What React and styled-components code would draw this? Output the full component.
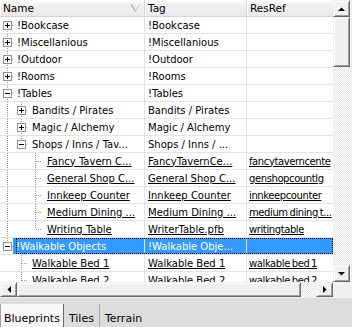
import React from 'react'
import styled, { createGlobalStyle } from 'styled-components'

const GlobalStyle = createGlobalStyle`
  html, body { margin: 0; padding: 0; background: #fff; }
  body {
    font-family: "DejaVu Sans", Verdana, sans-serif;
    font-size: 10px;
    color: #000;
  }
`

const LINE = '#a0a0a0'
const GRID = '#e3e3e3'

const rows = [
  { name: '!Bookcase', tag: '!Bookcase', gutter: [{ box: 'plus', down: true }] },
  { name: '!Miscellanious', tag: '!Miscellanious', gutter: [{ box: 'plus', up: true, down: true }] },
  { name: '!Outdoor', tag: '!Outdoor', gutter: [{ box: 'plus', up: true, down: true }] },
  { name: '!Rooms', tag: '!Rooms', gutter: [{ box: 'plus', up: true, down: true }] },
  { name: '!Tables', tag: '!Tables', gutter: [{ box: 'minus', up: true, down: true }] },
  { name: 'Bandits / Pirates', tag: 'Bandits / Pirates', gutter: [{ up: true, down: true, pass: true }, { box: 'plus', up: true, down: true }] },
  { name: 'Magic / Alchemy', tag: 'Magic / Alchemy', gutter: [{ up: true, down: true, pass: true }, { box: 'plus', up: true, down: true }] },
  { name: 'Shops / Inns / Tav...', tag: 'Shops / Inns / ...', gutter: [{ up: true, down: true, pass: true }, { box: 'minus', up: true }] },
  { name: 'Fancy Tavern C...', tag: 'FancyTavernCe...', res: 'fancytaverncente', leaf: true, gutter: [{ up: true, down: true, pass: true }, {}, { up: true, down: true }] },
  { name: 'General Shop C...', tag: 'General Shop C...', res: 'genshopcountlg', leaf: true, gutter: [{ up: true, down: true, pass: true }, {}, { up: true, down: true }] },
  { name: 'Innkeep Counter', tag: 'Innkeep Counter', res: 'innkeepcounter', leaf: true, gutter: [{ up: true, down: true, pass: true }, {}, { up: true, down: true }] },
  { name: 'Medium Dining ...', tag: 'Medium Dining ...', res: 'medium dining t...', leaf: true, gutter: [{ up: true, down: true, pass: true }, {}, { up: true, down: true }] },
  { name: 'Writing Table', tag: 'WriterTable.pfb', res: 'writingtable', leaf: true, gutter: [{ up: true, down: true, pass: true }, {}, { up: true }] },
  { name: '!Walkable Objects', tag: '!Walkable Obje...', selected: true, gutter: [{ box: 'minus', up: true }] },
  { name: 'Walkable Bed 1', tag: 'Walkable Bed 1', res: 'walkable bed 1', leaf: true, gutter: [{}, { up: true, down: true }] },
  { name: 'Walkable Bed 2', tag: 'Walkable Bed 2', res: 'walkable bed 2', leaf: true, gutter: [{}, { up: true, down: true }] },
]

function Segment({ box, up, down, pass }) {
  const hasLine = up || down
  return (
    <svg width="14" height="16" viewBox="0 0 14 16" shapeRendering="crispEdges" style={{ flex: 'none', display: 'block' }}>
      {hasLine && (
        <line x1="7.5" x2="7.5" y1={up ? 0 : 8} y2={down ? 16 : 8} stroke={LINE} strokeDasharray="1 1" />
      )}
      {hasLine && !pass && (
        <line x1={box ? 12 : 8} x2="14" y1="8.5" y2="8.5" stroke={LINE} strokeDasharray="1 1" />
      )}
      {box && (
        <g>
          <rect x="3.5" y="4.5" width="8" height="8" fill="#fff" stroke="#919191" />
          <line x1="5" x2="10" y1="8.5" y2="8.5" stroke="#000" />
          {box === 'plus' && <line x1="7.5" x2="7.5" y1="6" y2="11" stroke="#000" />}
        </g>
      )}
    </svg>
  )
}

function Arrow({ dir }) {
  const pts = {
    up: '0,4 7,4 3.5,0.5',
    down: '0,0 7,0 3.5,3.5',
    left: '4,0 4,7 0.5,3.5',
    right: '0,0 0,7 3.5,3.5',
  }[dir]
  const vertical = dir === 'up' || dir === 'down'
  return (
    <svg width={vertical ? 7 : 4} height={vertical ? 4 : 7} viewBox={vertical ? '0 0 7 4' : '0 0 4 7'}>
      <polygon points={pts} fill="#000" />
    </svg>
  )
}

export default function App() {
  return (
    <Frame>
      <GlobalStyle />
      <ListPane>
        <List>
          <Header>
            <HeaderCell>
              Name
              <SortGlyph width="9" height="8" viewBox="0 0 9 8">
                <polyline points="0.5,0.5 4.5,7.5" stroke="#8f8f8f" fill="none" />
                <polyline points="4.5,7.5 8.5,0.5" stroke="#c4c4c4" fill="none" />
              </SortGlyph>
            </HeaderCell>
            <HeaderCell>Tag</HeaderCell>
            <HeaderCell $last>ResRef</HeaderCell>
          </Header>
          {rows.map((r, i) => (
            <Row key={i}>
              <NameCell>
                <Gutter>
                  {r.gutter.map((g, j) => (
                    <Segment key={j} {...g} />
                  ))}
                </Gutter>
                <Label $level={r.gutter.length - 1} $leaf={r.leaf} $selected={r.selected}>
                  {r.name}
                </Label>
              </NameCell>
              <Cell $leaf={r.leaf} $selected={r.selected}>{r.tag}</Cell>
              <Cell $leaf={r.leaf} $selected={r.selected} $last>{r.res}</Cell>
              {r.selected && <FocusRect />}
            </Row>
          ))}
        </List>
        <VScroll>
          <ScrollButton><Arrow dir="up" /></ScrollButton>
          <Thumb style={{ height: 50 }} />
          <Track />
          <ScrollButton><Arrow dir="down" /></ScrollButton>
        </VScroll>
        <HScroll>
          <ScrollButton><Arrow dir="left" /></ScrollButton>
          <Thumb style={{ width: 284 }} />
          <Track />
          <ScrollButton><Arrow dir="right" /></ScrollButton>
        </HScroll>
        <Corner />
      </ListPane>
      <TabStrip>
        <Tab $active>Blueprints</Tab>
        <Tab>Tiles</Tab>
        <Tab $lastTab>Terrain</Tab>
      </TabStrip>
    </Frame>
  )
}

const Frame = styled.div`
  width: 352px;
  height: 327px;
  display: grid;
  grid-template-rows: 297px 1fr;
  background: #f0f0f0;
  overflow: hidden;
`

const ListPane = styled.div`
  display: grid;
  grid-template-columns: 333px 17px;
  grid-template-rows: 282px 15px;
  border-right: 2px solid #f0f0f0;
  background: #fff;
`

const List = styled.div`
  overflow: hidden;
  background: #fff;
`

const Header = styled.div`
  display: grid;
  grid-template-columns: 145px 102px 1fr;
  height: 17px;
  box-sizing: border-box;
  border-bottom: 1px solid #d5d5d5;
  background: linear-gradient(#ffffff, #f0f0f0 30%, #eaeaea);
  font-size: 10.5px;
`

const HeaderCell = styled.div`
  position: relative;
  display: flex;
  align-items: center;
  padding-left: 3px;
  box-sizing: border-box;
  border-right: ${p => (p.$last ? 'none' : '1px solid #d5d5d5')};
  box-shadow: inset 1px 0 0 #ffffff;
  white-space: nowrap;
`

const SortGlyph = styled.svg`
  position: absolute;
  right: 4px;
  top: 4px;
`

const Row = styled.div`
  position: relative;
  display: grid;
  grid-template-columns: 145px 102px 1fr;
  height: 17px;
  box-sizing: border-box;
  border-bottom: 1px solid ${GRID};
`

const NameCell = styled.div`
  display: flex;
  align-items: stretch;
  min-width: 0;
  border-right: 1px solid ${GRID};
`

const Gutter = styled.div`
  display: flex;
  flex: none;
`

const Label = styled.div`
  flex: 1;
  min-width: 0;
  display: flex;
  align-items: center;
  padding-left: ${p => 3 + p.$level}px;
  margin-left: ${p => (p.$selected ? -1 : 0)}px;
  white-space: nowrap;
  overflow: hidden;
  text-decoration: ${p => (p.$leaf ? 'underline' : 'none')};
  background: ${p => (p.$selected ? '#3399ff' : 'transparent')};
  color: ${p => (p.$selected ? '#fff' : '#000')};
`

const Cell = styled.div`
  display: flex;
  align-items: center;
  min-width: 0;
  padding-left: ${p => (p.$last ? 2 : 3)}px;
  white-space: nowrap;
  overflow: hidden;
  letter-spacing: ${p => (p.$last ? '-0.4px' : '0')};
  word-spacing: ${p => (p.$last ? '-1px' : '0')};
  border-right: ${p => (p.$last ? 'none' : `1px solid ${GRID}`)};
  text-decoration: ${p => (p.$leaf ? 'underline' : 'none')};
  background: ${p => (p.$selected ? '#3399ff' : 'transparent')};
  color: ${p => (p.$selected ? '#fff' : '#000')};
`

const FocusRect = styled.div`
  position: absolute;
  left: 16px;
  right: 0;
  top: 0;
  bottom: 0;
  border: 1px dotted #000;
  pointer-events: none;
`

const VScroll = styled.div`
  display: flex;
  flex-direction: column;
`

const HScroll = styled.div`
  display: flex;
`

const ScrollButton = styled.div`
  flex: none;
  width: 17px;
  height: 17px;
  box-sizing: border-box;
  display: flex;
  align-items: center;
  justify-content: center;
  background: #f0f0f0;
  border-top: 1px solid #f0f0f0;
  border-left: 1px solid #f0f0f0;
  border-right: 1px solid #696969;
  border-bottom: 1px solid #696969;
  box-shadow: inset 1px 1px 0 #fff, inset -1px -1px 0 #a0a0a0;
  ${HScroll} & {
    height: 15px;
  }
`

const Thumb = styled.div`
  flex: none;
  box-sizing: border-box;
  background: #f0f0f0;
  border-top: 1px solid #f0f0f0;
  border-left: 1px solid #f0f0f0;
  border-right: 1px solid #696969;
  border-bottom: 1px solid #696969;
  box-shadow: inset 1px 1px 0 #fff, inset -1px -1px 0 #a0a0a0;
`

const Track = styled.div`
  flex: 1;
  background-color: #fff;
  background-image: repeating-conic-gradient(#e6e6e6 0 25%, #ffffff 0 50%);
  background-size: 2px 2px;
`

const Corner = styled.div`
  background: #f0f0f0;
`

const TabStrip = styled.div`
  display: flex;
  align-items: flex-start;
  padding-top: 6px;
  background: #dcdcdc;
  border-top: 1px solid #f0f0f0;
`

const Tab = styled.div`
  height: 28px;
  display: flex;
  align-items: center;
  padding: 0 ${p => (p.$active ? 3 : 5)}px;
  font-size: 11px;
  background: ${p => (p.$active ? '#f7f7f7' : 'transparent')};
  border-left: ${p => (p.$active ? '1px solid #a0a0a0' : 'none')};
  border-right: 1px solid ${p => (p.$active ? '#696969' : '#a0a0a0')};
  ${p => p.$lastTab && 'border-right: none;'}
`
